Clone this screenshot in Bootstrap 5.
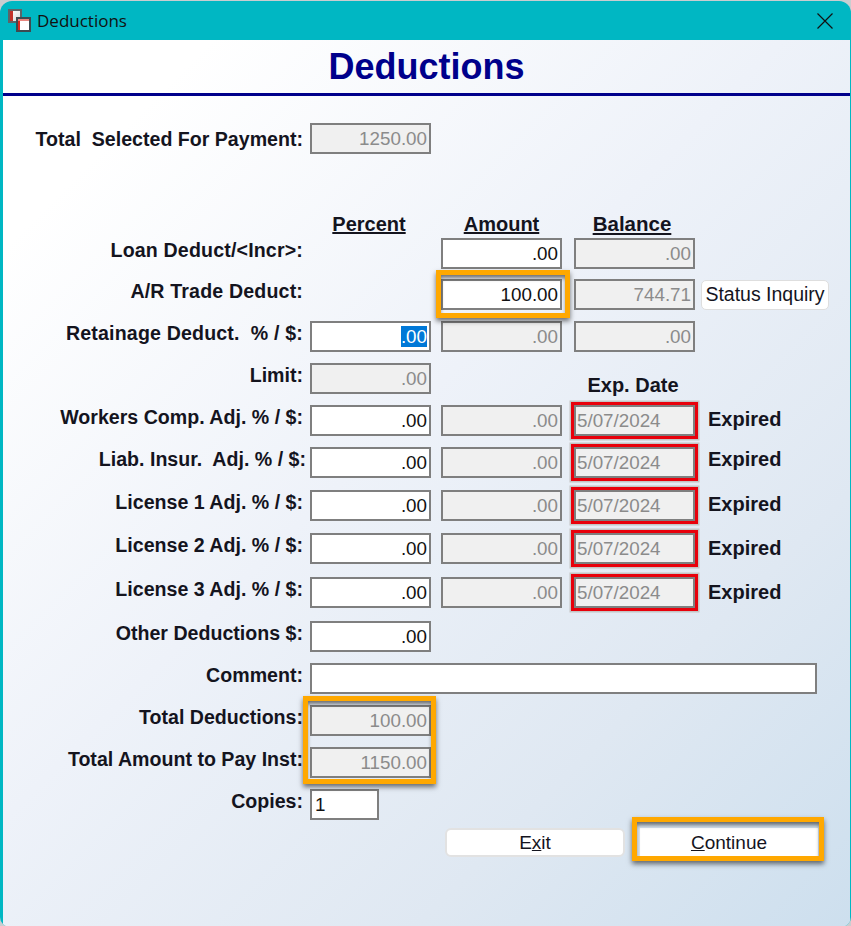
<!DOCTYPE html>
<html lang="en">
<head>
<meta charset="utf-8">
<title>Deductions</title>
<link rel="stylesheet" href="https://cdn.jsdelivr.net/npm/bootstrap@5.3.0/dist/css/bootstrap.min.css">
<style>
html,body{margin:0;width:851px;height:926px;overflow:hidden;background:#c9cdd0}
.dlg{width:851px;height:926px;border-radius:12px 12px 10px 10px;overflow:hidden;background:#00b7c3;padding:0 1px 1px 3px;display:flex;flex-direction:column;margin-top:1px}
.tbar{height:39px;flex:none;color:#111;font:17px "Open Sans","Noto Sans",sans-serif;margin-left:-3px;padding-left:7px;gap:5px}
.tclose{margin-left:auto;margin-right:16px;width:18px;height:18px}
.pane{flex:1;background:linear-gradient(135deg,#fff 12%,#eef2f9 45%,#dfe8f2 75%,#cddfee 100%);font-family:"Liberation Sans",Arial,sans-serif;position:relative}
.htitle{font-size:36px;font-weight:700;color:#00008b;height:52px;line-height:52px;margin:0;text-align:center;border-bottom:3px solid #00008b;box-sizing:content-box;padding-top:1px}
.frm{padding-top:27px}
.frow{display:flex;align-items:center;height:31px;margin-top:11px}
.frow.g2{margin-top:2px}.frow.g10{margin-top:10px}.frow.g12{margin-top:12px}.frow.g13{margin-top:13px}
.frow.first{margin-top:0}
.lbl{width:300px;flex:none;text-align:right;font-size:19.6px;font-weight:700;color:#14141e;margin-right:7px;white-space:nowrap;padding-bottom:8px;line-height:22px}
.lbl.lv0{padding-bottom:0}
.lbl.lsp{letter-spacing:.16px}
.lbl.wd{margin-right:4px;width:303px}
.cel{width:121px;flex:none}
.cel.c2{margin-left:10px}
.cel.c3{margin-left:12px}
.fld.form-control{width:100%;height:31px;border:2px solid #7f7f7f;border-radius:0;padding:0 2px 0 0;background:#fff;font-size:18.8px;text-align:right;color:#111;box-shadow:none;line-height:27px;display:block;font-family:"Liberation Sans",Arial,sans-serif}
.fld.off.form-control{background:#f0f0f0;color:#8b8b8b}
.fld.lft.form-control{text-align:left;padding:0 0 0 3px}
.sel{background:#0078d7;color:#fff}
.hd{font-size:20px;font-weight:700;color:#14141e;text-align:center;text-decoration:underline;line-height:24px}
.hd.hpc{padding-right:3px}
.hd.hbl{padding-right:5px;font-size:20.5px}
.frow.hrow{height:24px;margin-top:58px}
.ed{font-size:20px;font-weight:700;color:#14141e;text-align:center;white-space:nowrap;padding-top:12px;padding-right:3px;line-height:24px}
.red.fld.form-control{box-shadow:0 0 0 3px #e8000b,0 0 0 4.5px #c4c4c4;padding-left:1px;text-align:left}
.exp{margin-left:13px;font-size:20px;font-weight:700;color:#14141e;padding-bottom:7px}
.exp.e0{padding-bottom:3px}
.exp.e2{padding-bottom:2px}
.sbtn{margin-left:6px;width:128px;height:30px;padding:0;background:#fff;border:1px solid #dedede;border-radius:5px;font-size:19.5px;color:#14141e;line-height:1;white-space:nowrap}
.wide{width:507px;flex:none}
.cop{width:69px;flex:none}
.brow{margin-top:8px;height:29px;align-items:center;padding-left:442px}
.act{height:29px;width:180px;padding:0;background:#fff;border:2px solid #e2e2e2;border-radius:6px;font-size:19px;color:#14141e;line-height:1}
.act:hover{background:#fff;color:#14141e}
.act.go{width:178px;border-color:#fff;border-radius:0;display:block}
.mk{position:relative}
.mk::after{content:"";position:absolute;border:5px solid #ffa800;box-shadow:0 3px 5px rgba(0,0,0,.55),inset 0 4px 4px -1px rgba(0,0,0,.55);pointer-events:none}
.mk1::after{left:-5px;right:-8px;top:-9px;bottom:-8px}
.mk2::after{left:-7px;right:-5px;top:-9px;bottom:-6px}
.mk3{margin-left:15px}
.mk3::after{left:-8px;right:-6px;top:-11px;bottom:-4px}
.tot{display:flex;flex-direction:column;gap:11px;width:121px}
.stk{display:flex;align-items:flex-start;margin-top:11px}
.lbls{width:300px;margin-right:7px;display:flex;flex-direction:column;gap:11px}
.lbls .lbl{height:31px;margin:0;display:flex;align-items:center;justify-content:flex-end}
</style>
</head>
<body>
<div class="dlg">
  <div class="tbar d-flex align-items-center">
    <svg width="25" height="25" viewBox="0 0 25 25" aria-hidden="true">
      <defs><linearGradient id="gi" x1="0" y1="0" x2="1" y2="1"><stop offset="0" stop-color="#fff"/><stop offset="1" stop-color="#d8d8d8"/></linearGradient></defs>
      <rect x="1" y="1" width="14" height="14" fill="#5d6468"/>
      <rect x="3" y="3" width="10" height="10" fill="url(#gi)"/>
      <rect x="3" y="3" width="3" height="10" fill="#c2322a"/>
      <rect x="9" y="9" width="15" height="15" fill="#3e4a50"/>
      <rect x="11" y="11" width="11" height="11" fill="#fff"/>
      <rect x="11" y="11" width="2" height="11" fill="#e0281e"/>
      <rect x="11" y="11" width="11" height="2" fill="#e8867f"/>
    </svg>
    <span>Deductions</span>
    <svg class="tclose" viewBox="0 0 18 18" aria-hidden="true"><path d="M1.5 1.5 16.5 16.5M16.5 1.5 1.5 16.5" stroke="#111" stroke-width="1.2" fill="none"/></svg>
  </div>
  <div class="pane">
    <h1 class="htitle">Deductions</h1>
    <form class="frm">
      <div class="frow first"><div class="lbl lv0">Total&nbsp; Selected For Payment:</div><div class="cel"><input class="form-control fld off" readonly value="1250.00"></div></div>
      <div class="frow hrow"><div class="lbl"></div><div class="cel hd hpc">Percent</div><div class="cel c2 hd">Amount</div><div class="cel c3 hd hbl">Balance</div></div>
      <div class="frow g2"><div class="lbl lsp">Loan Deduct/&lt;Incr&gt;:</div><div class="cel"></div><div class="cel c2"><input class="form-control fld" value=".00"></div><div class="cel c3"><input class="form-control fld off" readonly value=".00"></div></div>
      <div class="frow g10"><div class="lbl lsp">A/R Trade Deduct:</div><div class="cel"></div><div class="cel c2 mk mk1"><input class="form-control fld" value="100.00"></div><div class="cel c3"><input class="form-control fld off" readonly value="744.71"></div><button type="button" class="btn sbtn">Status Inquiry</button></div>
      <div class="frow"><div class="lbl lsp">Retainage Deduct.&nbsp; % / $:</div><div class="cel"><div class="form-control fld"><span class="sel">.00</span></div></div><div class="cel c2"><input class="form-control fld off" readonly value=".00"></div><div class="cel c3"><input class="form-control fld off" readonly value=".00"></div></div>
      <div class="frow"><div class="lbl">Limit:</div><div class="cel"><input class="form-control fld off" readonly value=".00"></div><div class="cel c2"></div><div class="cel c3 ed">Exp. Date</div></div>
      <div class="frow"><div class="lbl">Workers Comp. Adj. % / $:</div><div class="cel"><input class="form-control fld" value=".00"></div><div class="cel c2"><input class="form-control fld off" readonly value=".00"></div><div class="cel c3"><input class="form-control fld off red" readonly value="5/07/2024"></div><div class="exp e0">Expired</div></div>
      <div class="frow"><div class="lbl wd">Liab. Insur.&nbsp; Adj. % / $:</div><div class="cel"><input class="form-control fld" value=".00"></div><div class="cel c2"><input class="form-control fld off" readonly value=".00"></div><div class="cel c3"><input class="form-control fld off red" readonly value="5/07/2024"></div><div class="exp">Expired</div></div>
      <div class="frow g12"><div class="lbl">License 1 Adj. % / $:</div><div class="cel"><input class="form-control fld" value=".00"></div><div class="cel c2"><input class="form-control fld off" readonly value=".00"></div><div class="cel c3"><input class="form-control fld off red" readonly value="5/07/2024"></div><div class="exp e0">Expired</div></div>
      <div class="frow g12"><div class="lbl">License 2 Adj. % / $:</div><div class="cel"><input class="form-control fld" value=".00"></div><div class="cel c2"><input class="form-control fld off" readonly value=".00"></div><div class="cel c3"><input class="form-control fld off red" readonly value="5/07/2024"></div><div class="exp e2">Expired</div></div>
      <div class="frow g13"><div class="lbl">License 3 Adj. % / $:</div><div class="cel"><input class="form-control fld" value=".00"></div><div class="cel c2"><input class="form-control fld off" readonly value=".00"></div><div class="cel c3"><input class="form-control fld off red" readonly value="5/07/2024"></div><div class="exp e2">Expired</div></div>
      <div class="frow g13"><div class="lbl">Other Deductions $:</div><div class="cel"><input class="form-control fld" value=".00"></div></div>
      <div class="frow"><div class="lbl">Comment:</div><div class="wide"><input class="form-control fld lft" value=""></div></div>
      <div class="stk">
        <div class="lbls"><div class="lbl">Total Deductions:</div><div class="lbl">Total Amount to Pay Inst:</div></div>
        <div class="tot mk mk2"><input class="form-control fld off" readonly value="100.00"><input class="form-control fld off" readonly value="1150.00"></div>
      </div>
      <div class="frow"><div class="lbl">Copies:</div><div class="cop"><input class="form-control fld lft" value="1"></div></div>
      <div class="d-flex brow">
        <button type="button" class="btn act">E<u>x</u>it</button>
        <div class="mk mk3"><button type="button" class="btn act go"><u>C</u>ontinue</button></div>
      </div>
    </form>
  </div>
</div>
<script src="https://cdn.jsdelivr.net/npm/bootstrap@5.3.0/dist/js/bootstrap.bundle.min.js"></script>
</body>
</html>
